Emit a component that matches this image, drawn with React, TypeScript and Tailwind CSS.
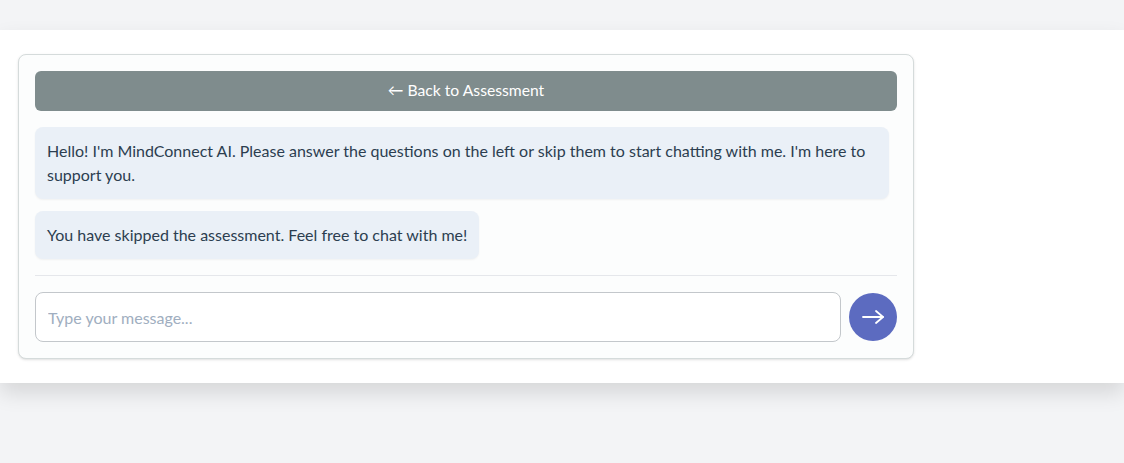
const messages = [
  "Hello! I'm MindConnect AI. Please answer the questions on the left or skip them to start chatting with me. I'm here to support you.",
  'You have skipped the assessment. Feel free to chat with me!',
];

export default function App() {
  return (
    <div className="min-h-screen bg-[#f3f4f6] pt-[30px] font-['Lato',sans-serif]">
      <div className="bg-white px-[18px] py-6 shadow-[0_10px_20px_rgba(0,0,0,0.12)]">
        <div className="flex w-[896px] flex-col rounded-lg border border-[#d5dbdb] bg-[#fcfdfd] p-4 shadow-sm">
          <button className="mb-4 h-10 rounded-md bg-[#7f8c8d] text-[15.7px] text-white">
            ← Back to Assessment
          </button>

          <div className="flex flex-col items-start gap-3 pb-4 pr-2">
            {messages.map((m, i) => (
              <div
                key={i}
                className="rounded-lg bg-[#eaf0f7] px-3 py-3 text-base leading-6 text-[#2c3e50] shadow-[0_1px_2px_rgba(0,0,0,0.05)]"
              >
                {m}
              </div>
            ))}
          </div>

          <div className="flex items-center gap-2 border-t border-[#e5e7eb] pt-4">
            <input
              type="text"
              placeholder="Type your message..."
              className="h-[50px] flex-1 rounded-lg border border-[#c3c7cb] bg-white px-3 text-base text-[#2c3e50] outline-none placeholder:text-[#a0aec0]"
            />
            <button className="flex h-12 w-12 items-center justify-center rounded-full bg-[#5c6bc0] text-white">
              <svg width="22" height="14" viewBox="0 0 22 14" fill="none" stroke="currentColor" strokeWidth="1.8" strokeLinecap="round" strokeLinejoin="round">
                <path d="M1 7h20" />
                <path d="M14 1l7 6-7 6" />
              </svg>
            </button>
          </div>
        </div>
      </div>
    </div>
  );
}
